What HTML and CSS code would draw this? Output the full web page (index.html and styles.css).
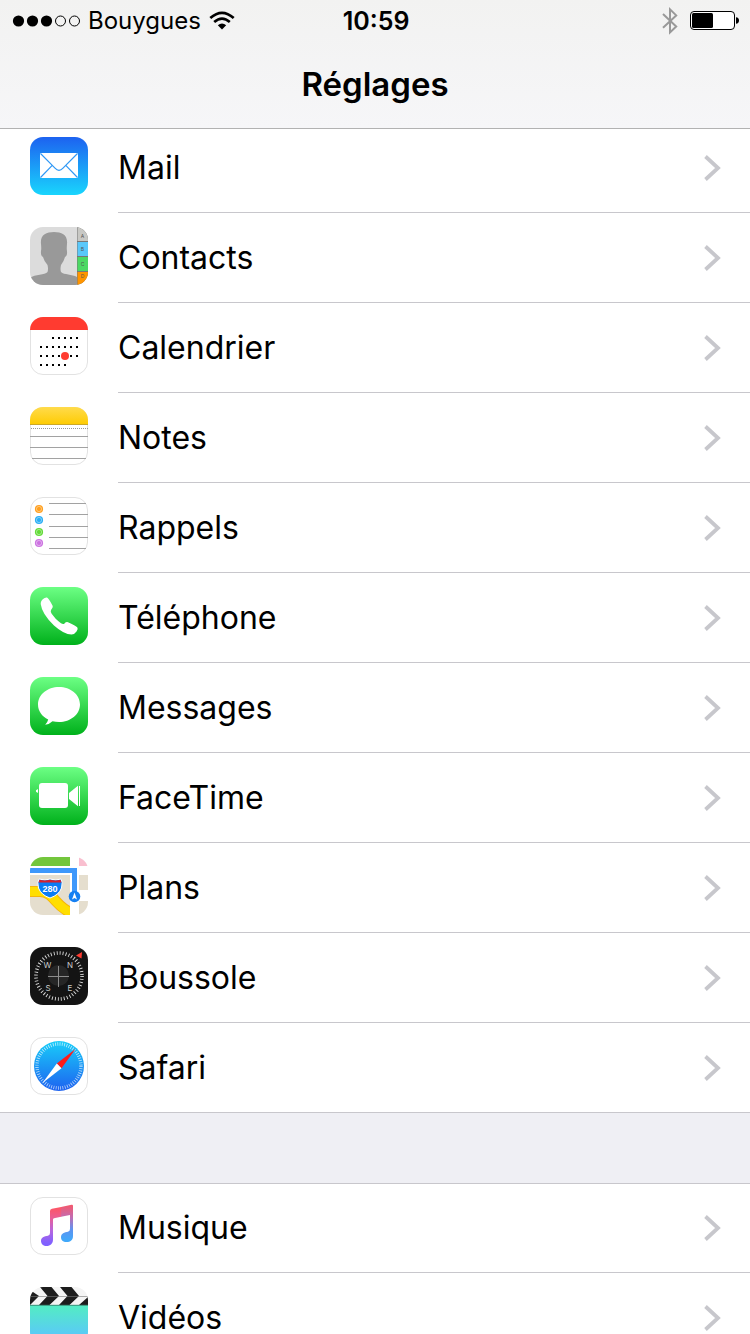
FILE: index.html
```html
<!DOCTYPE html>
<html lang="fr">
  <head>
    <meta charset="UTF-8" />
    <meta name="viewport" content="width=device-width, initial-scale=1.0" />
    <title>Réglages</title>
    <link rel="stylesheet" href="styles.css">
  </head>

  <body>
    <header class="header">
      <div class="status-bar">
        <div class="status-left">
          <svg class="signal" width="68" height="12" viewBox="0 0 68 12" aria-hidden="true">
            <circle cx="6.5" cy="6" r="5.6" />
            <circle cx="20.5" cy="6" r="5.6" />
            <circle cx="34.5" cy="6" r="5.6" />
            <circle cx="48.5" cy="6" r="5" fill="none" stroke="#000" />
            <circle cx="62.5" cy="6" r="5" fill="none" stroke="#000" />
          </svg>
          <span class="carrier">Bouygues</span>
          <svg width="26" height="19" viewBox="0 0 26 19" aria-hidden="true">
            <g fill="none" stroke="#000" stroke-width="2.7">
              <path d="M1.3 7 Q13 -3.4 24.7 7" />
              <path d="M5.2 11 Q13 4.2 20.8 11" />
            </g>
            <path d="M8.8 14.2 Q13 10.8 17.2 14.2 L13 18.4 Z" />
          </svg>
        </div>
        <time class="clock">10:59</time>
        <div class="status-right">
          <svg width="16" height="28" viewBox="0 0 16 28" aria-hidden="true">
            <path d="M1 7 L14.2 19.4 L8 25.4 V2.4 L14.2 8.4 L1 20.8" fill="none" stroke="#999" stroke-width="2" />
          </svg>
          <svg width="50" height="20" viewBox="0 0 50 20" aria-hidden="true">
            <rect x="0.5" y="0.5" width="44" height="18" rx="3.5" fill="#fff" stroke="#000" />
            <rect x="2" y="2" width="21" height="15" rx="1.5" />
            <path d="M46 6.2 Q49 6.6 49 9.5 Q49 12.4 46 12.8 Z" />
          </svg>
        </div>
      </div>
      <h1 class="title">Réglages</h1>
    </header>

    <!-- shared shapes -->
    <svg class="defs" width="0" height="0" aria-hidden="true">
      <defs>
        <linearGradient id="mailBg" x2="0" y2="1">
          <stop stop-color="#1d62f0" />
          <stop offset="1" stop-color="#19d5fd" />
        </linearGradient>
        <linearGradient id="greenBg" x2="0" y2="1">
          <stop stop-color="#6cff84" />
          <stop offset="1" stop-color="#00b11b" />
        </linearGradient>
        <linearGradient id="notesBg" x2="0" y2="1">
          <stop stop-color="#ffdb4c" />
          <stop offset="1" stop-color="#fecb00" />
        </linearGradient>
        <linearGradient id="safariBg" x2="0" y2="1">
          <stop stop-color="#19cdf9" />
          <stop offset="1" stop-color="#1d62f0" />
        </linearGradient>
        <linearGradient id="musicNote" gradientUnits="userSpaceOnUse" x1="24" y1="10" x2="24" y2="46">
          <stop stop-color="#ff5561" />
          <stop offset="0.3" stop-color="#ea5f94" />
          <stop offset="0.65" stop-color="#b766de" />
          <stop offset="1" stop-color="#8060ff" />
        </linearGradient>
        <linearGradient id="musicStem" gradientUnits="userSpaceOnUse" x1="40" y1="8" x2="40" y2="43">
          <stop stop-color="#f4586c" />
          <stop offset="0.35" stop-color="#c26cb2" />
          <stop offset="0.7" stop-color="#5e93f0" />
          <stop offset="1" stop-color="#41a8fa" />
        </linearGradient>
        <linearGradient id="videoBg" x2="0" y2="1">
          <stop stop-color="#53edc2" />
          <stop offset="0.8" stop-color="#5ac8fa" />
        </linearGradient>
        <clipPath id="tile">
          <rect width="58" height="58" rx="13" />
        </clipPath>
        <symbol id="chevron" viewBox="0 0 18 26">
          <path d="M1.5 1.5 L14 13 L1.5 24.5" fill="none" stroke="#c7c7cc" stroke-width="3.8" />
        </symbol>
      </defs>
    </svg>

    <main>
      <ul class="group">
        <li>
          <a class="row" href="#mail">
            <svg class="icon" viewBox="0 0 58 58" aria-hidden="true">
              <rect width="58" height="58" rx="13" fill="url(#mailBg)" />
              <rect x="10" y="16" width="38" height="25" rx="1" fill="#fff" />
              <path d="M10.5 16.5 L25 31.2 Q29 35.6 33 31.2 L47.5 16.5 M10.5 40.5 L22 28.6 M47.5 40.5 L36 28.6" fill="none" stroke="#2f98f5" stroke-width="1.2" />
            </svg>
            <span class="label">Mail<svg class="chevron"><use href="#chevron" /></svg></span>
          </a>
        </li>
        <li>
          <a class="row" href="#contacts">
            <svg class="icon" viewBox="0 0 58 58" aria-hidden="true">
              <g clip-path="url(#tile)">
                <rect width="58" height="58" fill="#dcdcdc" />
                <path d="M0 58 V51 C5 47 15 48 17.5 45 Q18.5 42 17.5 38 Q14 34 13 30 Q10.5 29 11 24 Q11.5 22 11 17 C10 8 16 5 24 5 C32 5 38 8 37 17 Q36.5 22 37 24 Q37.5 29 35 30 Q34 34 31 38 Q30 42 31 45 C34 48 42 47 47 50 V58 Z" fill="#999" />
                <rect x="47" width="11" height="58" fill="#777" />
                <rect x="47.5" width="11" height="14" fill="#c8c8c4" />
                <rect x="47.5" y="15" width="11" height="14" fill="#5ac8fa" />
                <rect x="47.5" y="30" width="11" height="14" fill="#4cd964" />
                <rect x="47.5" y="45" width="11" height="14" fill="#ff9500" />
                <g class="tab-text">
                  <text x="52.5" y="11">A</text>
                  <text x="52.5" y="24">B</text>
                  <text x="52.5" y="39">C</text>
                  <text x="52.5" y="51">D</text>
                </g>
              </g>
            </svg>
            <span class="label">Contacts<svg class="chevron"><use href="#chevron" /></svg></span>
          </a>
        </li>
        <li>
          <a class="row" href="#calendrier">
            <svg class="icon" viewBox="0 0 58 58" aria-hidden="true">
              <rect x="0.5" y="0.5" width="57" height="57" rx="12.5" fill="#fff" stroke="#e2e2e2" />
              <rect width="58" height="13" fill="#ff3b30" clip-path="url(#tile)" />
              <g stroke="#000" stroke-width="2" stroke-dasharray="2 4">
                <path d="M22 21 H48" />
                <path d="M10 30 H48" />
                <path d="M10 39 H48" />
                <path d="M10 48 H36" />
              </g>
              <circle cx="35" cy="39" r="4" fill="#ff3b30" />
            </svg>
            <span class="label">Calendrier<svg class="chevron"><use href="#chevron" /></svg></span>
          </a>
        </li>
        <li>
          <a class="row" href="#notes">
            <svg class="icon" viewBox="0 0 58 58" aria-hidden="true">
              <rect x="0.5" y="0.5" width="57" height="57" rx="12.5" fill="#fff" stroke="#e2e2e2" />
              <g clip-path="url(#tile)">
                <rect width="58" height="18" fill="url(#notesBg)" />
                <path d="M0 17.5 H58" stroke="#cba828" />
                <path d="M1 21.5 H58" stroke="#999" stroke-dasharray="1 1" />
                <path d="M0 29.5 H58 M0 40.5 H58 M2 51.5 H56" stroke="#a2a2a2" />
              </g>
            </svg>
            <span class="label">Notes<svg class="chevron"><use href="#chevron" /></svg></span>
          </a>
        </li>
        <li>
          <a class="row" href="#rappels">
            <svg class="icon" viewBox="0 0 58 58" aria-hidden="true">
              <rect x="0.5" y="0.5" width="57" height="57" rx="12.5" fill="#fff" stroke="#e2e2e2" />
              <path d="M19 6.5 H56 M19 17.5 H58 M19 29.5 H58 M19 40.5 H58 M19 51.5 H56" stroke="#a2a2a2" />
              <circle cx="9" cy="12" r="4.1" fill="#ff9f1e" />
              <circle cx="9" cy="23" r="4.1" fill="#2aaef5" />
              <circle cx="9" cy="35" r="4.1" fill="#63da38" />
              <circle cx="9" cy="46" r="4.1" fill="#cc73e1" />
              <g fill="none" stroke="#fff" stroke-opacity="0.4">
                <circle cx="9" cy="12" r="2.6" />
                <circle cx="9" cy="23" r="2.6" />
                <circle cx="9" cy="35" r="2.6" />
                <circle cx="9" cy="46" r="2.6" />
              </g>
            </svg>
            <span class="label">Rappels<svg class="chevron"><use href="#chevron" /></svg></span>
          </a>
        </li>
        <li>
          <a class="row" href="#telephone">
            <svg class="icon" viewBox="0 0 58 58" aria-hidden="true">
              <rect width="58" height="58" rx="13" fill="url(#greenBg)" />
              <path d="M12 13 Q14.5 10 17 10.5 Q18.5 11 22.5 18.5 Q23.3 20 22 21.5 L21 23 Q20.3 24.5 21.5 26.5 C24 30 27 33.5 31 36.3 Q33.3 37.6 34.5 36.500 Q36 34.7 38 35.2 Q46.5 39 47.5 40.8 Q48.2 42 46.5 44.5 Q44.5 47.5 41.5 47.5 Q34 47.5 24 38.5 Q12 27 10.7 17 Q10.5 15 12 13 Z" fill="#fff" />
            </svg>
            <span class="label">Téléphone<svg class="chevron"><use href="#chevron" /></svg></span>
          </a>
        </li>
        <li>
          <a class="row" href="#messages">
            <svg class="icon" viewBox="0 0 58 58" aria-hidden="true">
              <rect width="58" height="58" rx="13" fill="url(#greenBg)" />
              <path d="M29 10 C40.5 10 50 17.5 50 27.5 C50 37.5 40.5 45 29 45 Q25.5 45 22.5 44.3 Q19.5 47.3 15.2 47.7 Q17.7 45 18.2 42.5 C12 39.5 8 34 8 27.5 C8 17.5 17.5 10 29 10 Z" fill="#fff" />
            </svg>
            <span class="label">Messages<svg class="chevron"><use href="#chevron" /></svg></span>
          </a>
        </li>
        <li>
          <a class="row" href="#facetime">
            <svg class="icon" viewBox="0 0 58 58" aria-hidden="true">
              <rect width="58" height="58" rx="13" fill="url(#greenBg)" />
              <g fill="#fff">
                <rect x="9" y="16" width="29" height="25" rx="3" />
                <path d="M39 26 L48 18.8 V39.2 L39 32 Z" />
                <rect x="49" y="19" width="1" height="20" />
                <path d="M8 22 V26 L6 24.8 V23.2 Z" />
              </g>
            </svg>
            <span class="label">FaceTime<svg class="chevron"><use href="#chevron" /></svg></span>
          </a>
        </li>
        <li>
          <a class="row" href="#plans">
            <svg class="icon" viewBox="0 0 58 58" aria-hidden="true">
              <g clip-path="url(#tile)">
                <rect width="58" height="58" fill="#fff" />
                <rect width="40" height="9" fill="#73c63c" />
                <rect x="49" width="9" height="9" fill="#f9bfcf" />
                <rect y="18" width="40" height="40" fill="#e5dece" />
                <rect x="49" y="18" width="9" height="15" fill="#e5dece" />
                <rect x="49" y="44" width="9" height="14" fill="#e5dece" />
                <path d="M0 34.5 H10 C24 34.5 25 50 42 56" fill="none" stroke="#f5b50a" stroke-width="11" />
                <path d="M0 34.5 H10 C24 34.5 25 50 42 56" fill="none" stroke="#ffde00" stroke-width="9" />
                <path d="M50 58 Q54 58 58 53 V58 Z" fill="#ffde00" />
                <rect x="40" y="9" width="9" height="49" fill="#fff" />
                <path d="M0 13.5 H44.5 V36" fill="none" stroke="#3e98fb" stroke-width="5" />
                <path d="M9 22 Q15 24 20 22 Q26 24 31 22 Q33 25 31.5 31 Q29 38 20 41 Q11 38 8.5 31 Q7 25 9 22 Z" fill="#0a7cf5" stroke="#fff" />
                <path d="M9.5 22.8 Q15 24.3 20 22.8 Q26 24.3 30.5 22.8 L31.5 25.5 H8.5 Z" fill="#d7212d" />
                <text class="road" x="20" y="35">280</text>
                <circle cx="44.5" cy="39.5" r="5.8" fill="#1680f2" />
                <path d="M44.5 35.5 L47 42.5 L44.5 41 L42 42.5 Z" fill="#fff" />
              </g>
            </svg>
            <span class="label">Plans<svg class="chevron"><use href="#chevron" /></svg></span>
          </a>
        </li>
        <li>
          <a class="row" href="#boussole">
            <svg class="icon" viewBox="0 0 58 58" aria-hidden="true">
              <rect width="58" height="58" rx="13" fill="#141414" />
              <circle cx="29" cy="29" r="23" fill="none" stroke="#ddd" stroke-width="3.6" stroke-dasharray="0.9 2.111" />
              <circle cx="28.5" cy="28.5" r="10.5" fill="#262626" />
              <path d="M18 29.5 H39 M28.5 19 V40" stroke="#8c8c8c" />
              <path d="M46 8.5 L52 5 L51.5 11.5 Z" fill="#ff3b30" />
              <g class="compass-text">
                <text x="17.5" y="20.5">W</text>
                <text x="40" y="20.5">N</text>
                <text x="18" y="43.5">S</text>
                <text x="40" y="43.5">E</text>
              </g>
            </svg>
            <span class="label">Boussole<svg class="chevron"><use href="#chevron" /></svg></span>
          </a>
        </li>
        <li>
          <a class="row" href="#safari">
            <svg class="icon" viewBox="0 0 58 58" aria-hidden="true">
              <rect x="0.5" y="0.5" width="57" height="57" rx="12.5" fill="#fff" stroke="#e2e2e2" />
              <circle cx="29" cy="29" r="25" fill="url(#safariBg)" />
              <circle cx="29" cy="29" r="22" fill="none" stroke="#fff" stroke-opacity="0.7" stroke-width="3.4" stroke-dasharray="0.8 1.504" />
              <path d="M45.5 12 L26.8 26.5 L31.5 31.2 Z" fill="#ff1a1a" />
              <path d="M12.5 46 L26.8 26.5 L31.5 31.2 Z" fill="#fff" />
            </svg>
            <span class="label">Safari<svg class="chevron"><use href="#chevron" /></svg></span>
          </a>
        </li>
      </ul>

      <ul class="group">
        <li>
          <a class="row" href="#musique">
            <svg class="icon" viewBox="0 0 58 58" aria-hidden="true">
              <rect x="0.5" y="0.5" width="57" height="57" rx="12.5" fill="#fff" stroke="#e2e2e2" />
              <path d="M43 9 Q43 7.4 41.5 7.8 L31 9.9 V19.8 L40 18 V32 Q40 34.3 38 34.8 C34.5 35.5 31 36.5 31 40.2 C31 43 33 45 36.5 45 C40.500 45 43 43 43 39 Z" fill="url(#musicStem)" />
              <path d="M31.2 9.9 L22 11.7 Q20 12.2 20 14 V36 Q20 38.3 18 38.7 C14 39.3 11 40.5 11 44 C11 47 13.5 49 16.5 49 C20.5 49 23 46.5 23 42.5 V22.5 Q23 21.5 24 21.3 L31.2 19.8 Z" fill="url(#musicNote)" />
            </svg>
            <span class="label">Musique<svg class="chevron"><use href="#chevron" /></svg></span>
          </a>
        </li>
        <li>
          <a class="row" href="#videos">
            <svg class="icon" viewBox="0 0 58 58" aria-hidden="true">
              <g clip-path="url(#tile)">
                <rect width="58" height="58" fill="#f4f4f4" />
                <path d="M0 3 L9 9 L0 18 Z M10 0 H21.5 L29 9 L19.5 18 H9 L17.5 9 Z M30 0 H41.5 L49 9 L39.5 18 H29 L37.5 9 Z M58 10 L49 18 H58 Z" fill="#1c1c1c" />
                <path d="M0 9.5 H58" stroke="#777" stroke-width="0.6" />
                <rect y="18" width="58" height="40" fill="url(#videoBg)" />
                <path d="M0 18.3 H58" stroke="#3c8f7b" />
              </g>
            </svg>
            <span class="label">Vidéos<svg class="chevron"><use href="#chevron" /></svg></span>
          </a>
        </li>
      </ul>
    </main>
  </body>
</html>
```
FILE: styles.css
```css
* {
  margin: 0;
  padding: 0;
  box-sizing: border-box;
}

html,
body {
  height: 100%;
}

body {
  font-family: Inter, "Liberation Sans", sans-serif;
  background-color: #efeff4;
  color: #000;
  overflow: hidden;
}

.header {
  position: fixed;
  top: 0;
  left: 0;
  right: 0;
  z-index: 1;
  height: 129px;
  background: linear-gradient(#f2f2f1, #f6f6f8);
  border-bottom: 1px solid #b2b2b2;
}

.status-bar {
  display: grid;
  grid-template-columns: 1fr auto 1fr;
  align-items: center;
  height: 41px;
  padding: 0 10px 0 12px;
  font-size: 24px;
  line-height: 40px;
}

.status-left,
.status-right {
  display: flex;
  align-items: center;
}

.status-left {
  gap: 8px;
}

.status-right {
  justify-content: flex-end;
  gap: 12px;
}

.clock {
  font-size: 25px;
  font-weight: 600;
}

.title {
  font-size: 33px;
  font-weight: 600;
  line-height: 87px;
  text-align: center;
}

.defs {
  position: absolute;
}

main {
  padding-top: 123px;
}

.group {
  list-style: none;
  background-color: #fff;
  border-bottom: 1px solid #c8c7cc;
}

.group + .group {
  margin-top: 70px;
  box-shadow: inset 0 1px #c8c7cc;
}

.row {
  display: flex;
  align-items: flex-start;
  gap: 30px;
  padding-left: 30px;
  color: inherit;
  text-decoration: none;
}

.icon {
  flex: none;
  width: 58px;
  height: 58px;
  margin-top: 14px;
}

.label {
  flex: 1;
  display: flex;
  align-items: center;
  justify-content: space-between;
  height: 90px;
  padding-right: 28px;
  border-bottom: 1px solid #c8c7cc;
  font-size: 32px;
  line-height: 32px;
}

li:last-child .label {
  height: 89px;
  border-bottom: 0;
}

.chevron {
  width: 18px;
  height: 26px;
}

/* Lettering inside the icons */
.tab-text {
  font-size: 5px;
  text-anchor: middle;
  fill: #555;
}

.road {
  font-size: 9px;
  font-family: "Liberation Sans", sans-serif;
  font-weight: 700;
  text-anchor: middle;
  fill: #fff;
}

.compass-text {
  font-size: 8px;
  text-anchor: middle;
  fill: #ccc;
}
```
